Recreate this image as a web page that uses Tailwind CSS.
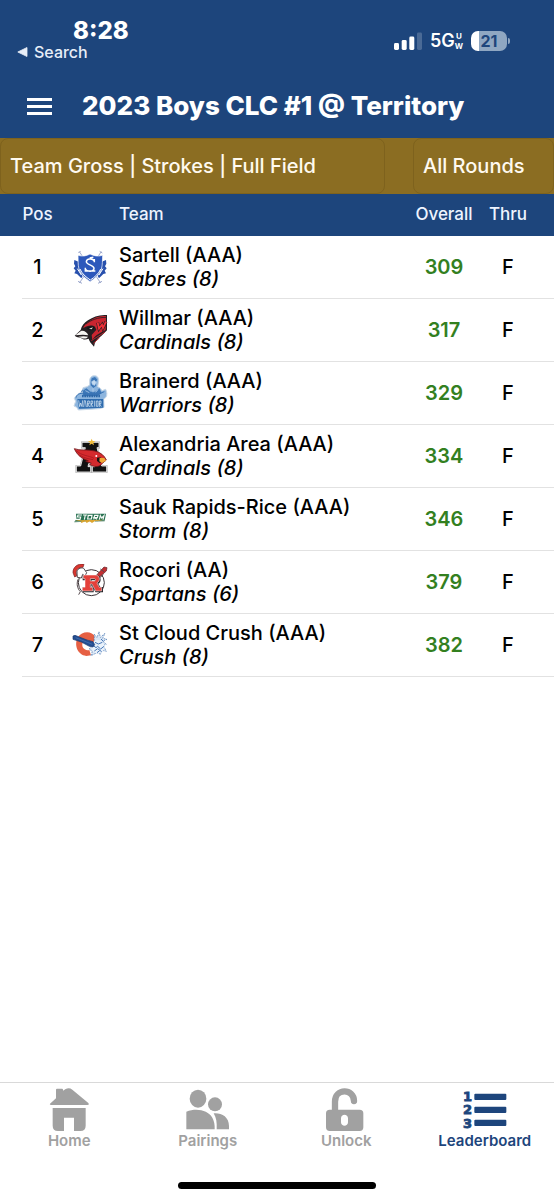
<!DOCTYPE html>
<html lang="en">
<head>
<meta charset="utf-8">
<meta name="viewport" content="width=device-width, initial-scale=1">
<title>2023 Boys CLC #1 @ Territory</title>
<script src="https://cdn.jsdelivr.net/npm/@tailwindcss/browser@4"></script>
</head>
<body class="bg-white font-['Inter',sans-serif] text-black">
<div class="flex min-h-screen flex-col">
  <header class="bg-[#1d457c] text-white">
    <div class="flex h-[74px] items-start justify-between pt-[16px] pl-[17px] pr-[44px]">
      <div class="flex flex-col">
        <time class="pl-[56px] text-[24px] leading-[30px] font-extrabold">8:28</time>
        <a href="#" class="flex items-center gap-[6px] text-[16px] leading-[12px] font-medium text-[#e8eef8]">
          <svg class="h-[10px] w-[11px]" viewBox="0 0 11 10" fill="currentColor" aria-hidden="true"><path d="M10 .5v9L.8 5z" stroke="currentColor" stroke-width=".8" stroke-linejoin="round"/></svg>
          Search</a>
      </div>
      <div class="flex items-center pt-[15px]">
        <svg class="h-[20px] w-[28px]" viewBox="0 0 28 20" fill="#fff" aria-label="Signal strength"><rect x="0" y="12" width="5" height="7" rx="1.4"/><rect x="7.7" y="9" width="5" height="10" rx="1.4"/><rect x="15.3" y="5.5" width="5" height="13.5" rx="1.4"/><rect x="23" y="1.5" width="5" height="17.5" rx="1.4" opacity=".2"/></svg>
        <span class="ml-[8px] text-[18px] leading-[20px] font-semibold">5G</span>
        <span class="flex flex-col items-center text-[8px] leading-[10px] font-bold"><span>U</span><span>W</span></span>
        <span class="ml-[8px] flex h-[20px] w-[36px] items-center justify-center rounded-[7px] bg-linear-to-r from-white from-22% to-[#8fa7c2] to-22% text-[16px] font-bold text-[#1d457c]">21</span>
        <span class="ml-px h-[6px] w-[2px] rounded-r-full bg-[#8fa7c2]"></span>
      </div>
    </div>
    <div class="flex h-[64px] items-center gap-[30px] pl-[27px]">
      <button type="button" aria-label="Open menu" class="flex w-[25px] flex-col gap-[4px]"><span class="h-[3px] bg-white"></span><span class="h-[3px] bg-white"></span><span class="h-[3px] bg-white"></span></button>
      <h1 class="text-[26px] leading-[32px] font-extrabold whitespace-nowrap">2023 Boys CLC #1 @ Territory</h1>
    </div>
  </header>

  <div class="flex h-[56px] justify-between bg-[#8b6d22] text-[20px] font-medium text-[#fffaf0]">
    <button type="button" class="w-[385px] rounded-[8px] border border-[#7e621d] pl-[9px] text-left">Team Gross | Strokes | Full Field</button>
    <button type="button" class="w-[141px] rounded-[8px] border border-[#7e621d] pl-[9px] text-left whitespace-nowrap">All Rounds</button>
  </div>

  <main class="grow pl-[22px]">
    <table class="w-full table-fixed border-separate border-spacing-0">
      <colgroup><col class="w-[31px]"><col class="w-[66px]"><col><col class="w-[72px]"><col class="w-[74px]"></colgroup>
      <thead class="bg-[#1d457c] text-[17px] leading-[20px] text-[#eef4ff]">
        <tr class="h-[42px]">
          <th scope="col" class="pb-[2px] font-medium shadow-[-22px_0_0_#1d457c]">Pos</th>
          <th></th>
          <th scope="col" class="pb-[2px] text-left font-medium">Team</th>
          <th scope="col" class="pb-[2px] font-medium">Overall</th>
          <th scope="col" class="pr-[18px] pb-[2px] font-medium">Thru</th>
        </tr>
      </thead>
      <tbody class="text-[20px] leading-[24px] font-medium [&_td]:border-b [&_td]:border-[#e2e2e2]">
        <tr class="h-[63px]">
          <td class="text-center">1</td>
          <td class="pl-[19px]"><svg class="size-[36px]" viewBox="36 28 108 108" role="img" aria-label="Sabres logo">
            <g stroke="#8d9ac4" stroke-width="2.5" fill="none"><path d="M58 36L122 130M124 36L58 130M55 39l7-4M119 35l8 5M54 125l12 6M114 131l12-6"/></g>
            <path d="M43 61l13 5 1 26 11 17-4 7-13-13-8-2 4-8-6-7 5-6-4-8zM138 61l-13 5-1 26-11 17 4 7 13-13 8-2-4-8 6-7-5-6 4-8z" fill="#2850ad"/>
            <path d="M54 47c14 4 25 2 36-4 12 6 24 8 38 4-1 14 0 29-4 42-5 16-19 27-33 37-16-10-29-22-34-38-4-13-2-27-3-41z" fill="#2d58bb" stroke="#fff" stroke-width="2"/>
            <path d="M60 88c5 13 17 24 31 33 14-9 26-20 31-33M52 87l12 19M129 87l-12 19" fill="none" stroke="#fff" stroke-width="3"/>
            <path d="M103 64c-6-9-23-7-24 2-1 10 23 9 23 20 0 11-20 11-27 2M103 58v10M76 84v10h30M89 55l11-2" fill="none" stroke="#fff" stroke-width="4.5"/>
          </svg></td>
          <td>Sartell (AAA)<br><i>Sabres (8)</i></td>
          <td class="text-center font-semibold text-[#33801f]">309</td>
          <td class="pr-[18px] text-center">F</td>
        </tr>
        <tr class="h-[63px]">
          <td class="text-center">2</td>
          <td class="pl-[19px]"><svg class="size-[36px]" viewBox="36 217 108 108" role="img" aria-label="Cardinals logo">
            <path d="M141 226c-23-2-41 5-57 16-12 8-19 17-22 29l-18 17c6 5 12 5 18 6 7 7 16 6 24 3 2 8 8 15 16 24 2-15 10-25 21-31l18-18z" fill="#251f22"/>
            <path d="M138 229c-21 0-36 5-50 16-9 6-16 13-19 20 14-9 28-10 36-4l4 9-14 16 2 15c6-11 16-18 40-30z" fill="#ca2530"/>
            <path d="M78 253c15-12 36-20 60-20" fill="none" stroke="#251f22" stroke-width="2.5"/>
            <path d="M46 287l17-13c9-2 17 3 22 13-12-3-24-2-39 0zM55 291c12-2 20-2 29 0-3 6-13 8-20 3z" fill="#f7f5f2"/>
            <path d="M79 265c8-6 18-7 25-3l-3 8c-8 4-17 2-22-5z" fill="#171519"/><path d="M87 267l12-4-4 6z" fill="#e8e2dc"/>
            <path d="M113 249l4 18 9-12 3 10 9-19" fill="none" stroke="#251f22" stroke-width="9"/><path d="M113 249l4 18 9-12 3 10 9-19" fill="none" stroke="#ef3038" stroke-width="5.5"/>
            <path d="M94 303l41-26M100 311l19-17" stroke="#b6222c" stroke-width="3"/>
          </svg></td>
          <td>Willmar (AAA)<br><i>Cardinals (8)</i></td>
          <td class="text-center font-semibold text-[#33801f]">317</td>
          <td class="pr-[18px] text-center">F</td>
        </tr>
        <tr class="h-[63px]">
          <td class="text-center">3</td>
          <td class="pl-[19px]"><svg class="size-[36px]" viewBox="36 40 108 108" role="img" aria-label="Warriors logo">
            <path d="M89 64c-2-14 4-22 14-22s15 8 12 22l-2 11c8 3 11 8 13 12l11-4c4 8 5 17 1 24l-7 5 1 25-14 4-63 4-5-8-8-4 5-14-4-9c5-10 15-17 24-18l2-14 12-3 8-5z" fill="#8db5de" stroke="#c9d8e7" stroke-width="3"/>
            <path d="M92 63l3-13 10-4 7 8-5 8 2 10-9 7-8-8zM68 88l11-8 13 10h14l12-10 7 15-13 8H70z" fill="#3c77b8"/>
            <path d="M95 60l8-4 5 6-4 9-7-3zM76 87l12 6M99 80v12M114 84l-7 8" fill="#c3daf0" stroke="#c3daf0" stroke-width="2"/>
            <path d="M48 108c2-10 12-15 24-12l44 1 17-7M64 92l4-8" fill="none" stroke="#3973b4" stroke-width="3"/>
            <path d="M66 103h54" stroke="#2c67a8" stroke-width="7" stroke-dasharray="5 2"/>
            <path d="M52 112h78v26l-73 3z" fill="#2f6cae"/>
            <path d="M56 116l3 19 3-11 4 11 2-19M71 136l2-19h3l3 19M83 136v-18h5v8h-5l6 10M93 136v-18h5v8h-5l6 10M104 117v18M109 118h5v16h-5zM118 136v-18h5v8h-5l6 9" fill="none" stroke="#e7f2fb" stroke-width="2"/>
          </svg></td>
          <td>Brainerd (AAA)<br><i>Warriors (8)</i></td>
          <td class="text-center font-semibold text-[#33801f]">329</td>
          <td class="pr-[18px] text-center">F</td>
        </tr>
        <tr class="h-[63px]">
          <td class="text-center">4</td>
          <td class="pl-[19px]"><svg class="size-[36px]" viewBox="36 229 108 108" role="img" aria-label="Cardinals logo">
            <path d="M66 242h51v16h-6l14 55h15v18H97v-16h8l-2-9H86l-2 9h8v16H49v-18h13l14-55H66z" fill="#111" stroke="#999" stroke-width="5"/>
            <path d="M66 242h51v16h-6l14 55h15v18H97v-16h8l-2-9H86l-2 9h8v16H49v-18h13l14-55H66z" fill="#111" stroke="#fff" stroke-width="2.500"/>
            <path d="M95 231l3 7h8l-6 5 2 8-7-5-7 5 2-8-6-5h8z" fill="#f0bd3e"/>
            <path d="M43 261c17 7 38 1 62 7 16 4 28 13 34 27l-12 10c-9 13-24 11-38 4l5-4-17-6 8-2c-20-6-34-17-42-36z" fill="#d52a2d" stroke="#711317" stroke-width="2.5"/>
            <path d="M49 267c16 16 37 14 53 23M60 281c14 10 28 10 39 13" fill="none" stroke="#9d171e" stroke-width="2"/>
            <path d="M111 288l11-1 7 7-9 11-9-7z" fill="#171114"/><path d="M119 288l14 1 5 8-12 7-8-5z" fill="#efa936"/><circle cx="109" cy="283" r="3" fill="#fff"/>
          </svg></td>
          <td>Alexandria Area (AAA)<br><i>Cardinals (8)</i></td>
          <td class="text-center font-semibold text-[#33801f]">334</td>
          <td class="pr-[18px] text-center">F</td>
        </tr>
        <tr class="h-[63px]">
          <td class="text-center">5</td>
          <td class="pl-[19px]"><svg class="size-[36px]" viewBox="36 49 108 108" role="img" aria-label="Storm logo">
            <path d="M48 87h90l-4 21-91 3 6-7z" fill="#287252"/>
            <path d="M45 107l87-2-20 5-7-1-9 6-7-5-9 5-4-5-12 5-3-5z" fill="#dda52f"/>
            <path d="M66 91H54l-2 6h10l-2 7H48M69 91h13M76 91l-3 14M85 92h11l-2 11H83zM101 104l3-12h10l-2 7h-9l8 5M118 105l3-12 4 7 7-7-3 12" fill="none" stroke="#f8faf7" stroke-width="3.5"/>
            <path d="M43 112l22-2M105 110l29-1" stroke="#658f74" stroke-width="2"/>
          </svg></td>
          <td>Sauk Rapids-Rice (AAA)<br><i>Storm (8)</i></td>
          <td class="text-center font-semibold text-[#33801f]">346</td>
          <td class="pr-[18px] text-center">F</td>
        </tr>
        <tr class="h-[63px]">
          <td class="text-center">6</td>
          <td class="pl-[19px]"><svg class="size-[36px]" viewBox="36 43 108 108" role="img" aria-label="Spartans logo">
            <circle cx="94" cy="99" r="39" fill="#fff" stroke="#3c3438" stroke-width="3"/>
            <path d="M108 78l24-26 9 2-2 10-24 21z" fill="#c42f32" stroke="#5d1b20" stroke-width="2"/>
            <path d="M72 44c-20-4-34 10-33 25l5 13 7-4c-7-13 2-25 18-25z" fill="#d9382f" stroke="#742026" stroke-width="2"/>
            <path d="M51 70c-1-12 10-18 20-14l9 13-5 10-7-5-4 11-12-2z" fill="#fff" stroke="#55494d" stroke-width="3"/>
            <path d="M54 89c-5 15-2 27 7 37l-5 9M117 86l13-11M121 58l12 9" fill="none" stroke="#55494d" stroke-width="3"/>
            <path fill-rule="evenodd" d="M73 78h34c15 0 17 17 5 24l8 12h7v12h-19l-12-21h-4v9h7v12H70v-12h7V90h-7V78zM93 90v6h10c6 0 6-6 0-6z" fill="#252126" stroke="#252126" stroke-width="4"/>
            <path fill-rule="evenodd" d="M70 76h35c16 0 17 18 6 24l7 13h7v11h-18l-11-21h-5v10h7v11H67v-11h8V87h-5zM91 87v7h11c6 0 6-7 0-7z" fill="#e4403a" stroke="#fff" stroke-width="1.5"/>
          </svg></td>
          <td>Rocori (AA)<br><i>Spartans (6)</i></td>
          <td class="text-center font-semibold text-[#33801f]">379</td>
          <td class="pr-[18px] text-center">F</td>
        </tr>
        <tr class="h-[63px]">
          <td class="text-center">7</td>
          <td class="pl-[19px]"><svg class="size-[36px]" viewBox="36 232 108 108" role="img" aria-label="Crush logo">
            <path d="M107 262c-13-20-41-18-53 1-13 22-2 53 25 56l14-2-5-16c-16 4-26-12-19-23 6-10 18-9 24 3l14-5z" fill="#e66043"/>
            <path d="M103 254l8 10 6-18 4 17 14-12-7 15 13 3-12 6 10 9-9 3 9 18-16-4-1 13-11-5-18 9 4-13-10-7 8-7-5-8 12-4z" fill="#d8e5f4" stroke="#3f6fae" stroke-width="2" stroke-dasharray="5 3"/>
            <circle cx="114" cy="291" r="20" fill="#e9f1fa"/>
            <path d="M105 278l10 5 12-5M99 287l9 7 5-4 9 8 10-8M103 304l10-7 12 9M111 309l8-6M123 268l7 7" fill="none" stroke="#4778b8" stroke-width="3"/>
            <path d="M39 259l6-2 36 14 18 5 5 9-5 7-11-2-24-13-25-8z" fill="#244d91" stroke="#17386e" stroke-width="2"/>
            <path d="M47 264l50 20" stroke="#4b79b7" stroke-width="2"/>
          </svg></td>
          <td>St Cloud Crush (AAA)<br><i>Crush (8)</i></td>
          <td class="text-center font-semibold text-[#33801f]">382</td>
          <td class="pr-[18px] text-center">F</td>
        </tr>
      </tbody>
    </table>
  </main>

  <footer class="border-t border-[#d9d9d9] bg-white">
    <nav class="grid grid-cols-4 pt-[5px] text-[15px] leading-[18px] font-semibold text-[#a1a1a1]" aria-label="Main">
      <a href="#" class="flex flex-col items-center"><svg class="h-[44px] w-[46px]" viewBox="138 39 138 132" fill="currentColor" aria-hidden="true"><path d="M150 86l18-16V44q0-3 3-3h15q3 0 3 3v3l8-5q11-5 20 2l48 40q4 6-3 6H154q-6 0-4-4zM158 99h99v53q0 16-16 16h-19v-40h-30v40h-18q-16 0-16-16z"/></svg>Home</a>
      <a href="#" class="flex flex-col items-center"><svg class="h-[44px] w-[46px]" viewBox="554 39 138 132" fill="currentColor" aria-hidden="true"><ellipse cx="593" cy="71" rx="25" ry="27"/><circle cx="644" cy="88" r="21"/><path d="M558 163v-53c32-12 65-4 78 18q8 14 7 35zM640 115c23-2 46 10 46 38v10h-37c1-20-1-35-9-48z"/></svg>Pairings</a>
      <a href="#" class="flex flex-col items-center"><svg class="h-[44px] w-[46px]" viewBox="135 39 138 132" fill="currentColor" aria-hidden="true"><path d="M171 110V80c0-41 57-40 57-2" fill="none" stroke="currentColor" stroke-width="19" stroke-linecap="round"/><path fill-rule="evenodd" d="M155 104h90q11 0 11 11v42q0 11-11 11h-90q-11 0-11-11v-42q0-11 11-11zM189 130v12c0 14 21 14 21 0v-12c0-14-21-14-21 0z"/></svg>Unlock</a>
      <a href="#" aria-current="page" class="flex flex-col items-center text-[#1d457c]"><svg class="h-[44px] w-[46px]" viewBox="554 39 138 132" fill="currentColor" aria-hidden="true"><g font-family="DejaVu Sans" font-weight="700" font-size="39" stroke="currentColor" stroke-width="2.5"><text x="557" y="79">1</text><text x="557" y="118">2</text><text x="557" y="158">3</text></g><rect x="591" y="56" width="96" height="19" rx="3"/><rect x="591" y="95" width="96" height="19" rx="3"/><rect x="591" y="134" width="96" height="19" rx="3"/></svg>Leaderboard</a>
    </nav>
    <div class="flex h-[50px] items-end justify-center pb-[11px]"><div class="h-[7px] w-[198px] rounded-full bg-black"></div></div>
  </footer>
</div>
</body>
</html>
